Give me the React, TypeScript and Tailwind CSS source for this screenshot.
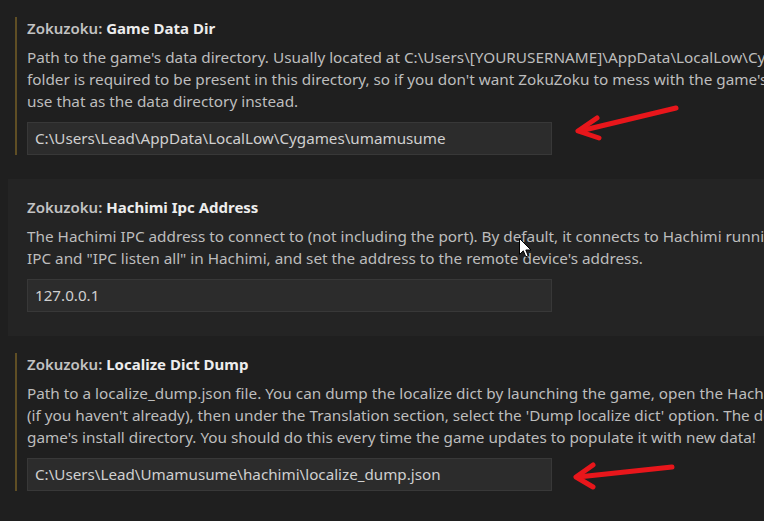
import React from "react";

type Setting = {
  name: string;
  lines: string[];
  value: string;
  modified: boolean;
  hover: boolean;
};

const settings: Setting[] = [
  {
    name: "Game Data Dir",
    lines: [
      "Path to the game's data directory. Usually located at C:\\Users\\[YOURUSERNAME]\\AppData\\LocalLow\\Cygames\\umamusume. The dat",
      "folder is required to be present in this directory, so if you don't want ZokuZoku to mess with the game's files, copy it and",
      "use that as the data directory instead.",
    ],
    value: "C:\\Users\\Lead\\AppData\\LocalLow\\Cygames\\umamusume",
    modified: true,
    hover: false,
  },
  {
    name: "Hachimi Ipc Address",
    lines: [
      "The Hachimi IPC address to connect to (not including the port). By default, it connects to Hachimi running on this machine. Enable",
      "IPC and \"IPC listen all\" in Hachimi, and set the address to the remote device's address.",
    ],
    value: "127.0.0.1",
    modified: false,
    hover: true,
  },
  {
    name: "Localize Dict Dump",
    lines: [
      "Path to a localize_dump.json file. You can dump the localize dict by launching the game, open the Hachimi menu, enable debug mode",
      "(if you haven't already), then under the Translation section, select the 'Dump localize dict' option. The dump will be in the",
      "game's install directory. You should do this every time the game updates to populate it with new data!",
    ],
    value: "C:\\Users\\Lead\\Umamusume\\hachimi\\localize_dump.json",
    modified: true,
    hover: false,
  },
];

function SettingItem({ s }: { s: Setting }) {
  return (
    <div
      className={
        s.hover
          ? "ml-[8px] w-[1200px] bg-[#242424] pt-[17px] pb-[24px]"
          : "ml-[8px] w-[1200px] pt-[17px] pb-[24px]"
      }
    >
      <div className="flex">
        <div
          className={
            s.modified
              ? "ml-[7px] w-[2px] bg-[#5f4e24]"
              : "ml-[7px] w-[2px]"
          }
        />
        <div className="ml-[10px] flex flex-col">
          <div className="h-[22px] leading-[22px] whitespace-nowrap text-[15px]">
            <span className="text-[#c2c2c2] font-semibold">Zokuzoku: </span>
            <span className="text-[#ededed] font-bold">{s.name}</span>
          </div>
          <div className="mt-[7px] flex flex-col text-[15.3px] text-[#bdbdbd]">
            {s.lines.map((l, i) => (
              <div key={i} className="h-[22px] leading-[22px] whitespace-nowrap">
                {l}
              </div>
            ))}
          </div>
          <div className="mt-[10px] flex h-[33px] w-[525px] items-center border border-[#383838] bg-[#2c2c2c] px-[7px] text-[15.2px] text-[#d0d0d0] whitespace-nowrap">
            {s.value}
          </div>
        </div>
      </div>
    </div>
  );
}

export default function App() {
  return (
    <div
      className="relative h-[521px] w-[764px] overflow-hidden bg-[#1f1f1f]"
      style={{ fontFamily: '"Noto Sans", "Open Sans", sans-serif' }}
    >
      <div className="flex flex-col">
        {settings.map((s) => (
          <SettingItem key={s.name} s={s} />
        ))}
      </div>

      <svg
        className="pointer-events-none absolute left-0 top-0"
        width="764"
        height="521"
        viewBox="0 0 764 521"
      >
        <g stroke="#e8161b" strokeWidth="5" strokeLinecap="round" strokeLinejoin="round" fill="none">
          <path d="M676 108 L580 131" />
          <path d="M597 118 L578 131 L599 138" />
          <path d="M672 467 L578 477" />
          <path d="M593 465 L576 477 L593 487" />
        </g>
      </svg>

      <svg
        className="pointer-events-none absolute left-[519px] top-[238px]"
        width="13"
        height="21"
        viewBox="0 0 13 21"
      >
        <path
          d="M0.5 0.5 L0.5 16.5 L4.3 12.8 L6.8 18.8 L9.2 17.8 L6.8 12 L12 12 Z"
          fill="#ffffff"
          stroke="#000000"
          strokeWidth="1"
          strokeLinejoin="round"
        />
      </svg>
    </div>
  );
}
